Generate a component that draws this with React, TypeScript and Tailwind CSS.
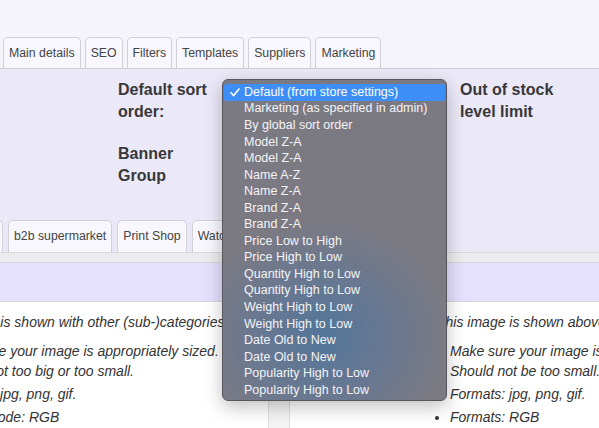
const topTabs = ['Main details', 'SEO', 'Filters', 'Templates', 'Suppliers', 'Marketing'];
const lowerTabs = ['Fashion', 'b2b supermarket', 'Print Shop', 'Watches'];

const sortOptions = [
    'Default (from store settings)',
    'Marketing (as specified in admin)',
    'By global sort order',
    'Model Z-A',
    'Model Z-A',
    'Name A-Z',
    'Name Z-A',
    'Brand Z-A',
    'Brand Z-A',
    'Price Low to High',
    'Price High to Low',
    'Quantity High to Low',
    'Quantity High to Low',
    'Weight High to Low',
    'Weight High to Low',
    'Date Old to New',
    'Date Old to New',
    'Popularity High to Low',
    'Popularity High to Low',
];

function Tab({ label, className = '' }: { label: string; className?: string }) {
    return (
        <div
            className={`flex h-full shrink-0 items-center justify-center whitespace-nowrap rounded-t-[5px] border border-b-0 border-[#d0d0d6] bg-[#f8f7fe] px-[5px] text-[12.3px] text-[#444] ${className}`}
        >
            {label}
        </div>
    );
}

function SortDropdown() {
    return (
        <div className="absolute left-[222px] top-[79px] h-[322px] w-[225px] overflow-hidden rounded-[6px] border border-[#56565c] bg-[radial-gradient(ellipse_70%_45%_at_45%_80%,#53769a_0%,#6a7890_45%,#7b7a83_80%)] pt-[4px] shadow-[0_6px_18px_rgba(0,0,0,0.25)]">
            {sortOptions.map((opt, i) => (
                <div
                    key={i}
                    className={`relative mx-px flex h-[16.56px] items-center whitespace-nowrap pl-[20px] text-[12.5px] text-[#f4f4f6] ${
                        i === 0 ? 'rounded-[2px] bg-[#3d8ef6] text-white' : ''
                    }`}
                >
                    {i === 0 && (
                        <svg className="absolute left-[6px] top-[4px]" width="10" height="9" viewBox="0 0 10 9" fill="none">
                            <path d="M1 4.8 L3.7 7.6 L9 1" stroke="white" strokeWidth="1.6" strokeLinecap="round" strokeLinejoin="round" />
                        </svg>
                    )}
                    {opt}
                </div>
            ))}
        </div>
    );
}

function ImageNotes({
    className = '',
    intro,
    second,
    last,
}: {
    className?: string;
    intro: string;
    second: string;
    last: string;
}) {
    return (
        <div className={`whitespace-nowrap pt-[10px] text-[14px] italic leading-[20px] text-[#333] ${className}`}>
            <p>{intro}</p>
            <ul className="mt-[9px] list-disc space-y-[3px] pl-[13px]">
                <li>
                    Make sure your image is appropriately sized.
                    <br />
                    {second}
                </li>
                <li>Formats: jpg, png, gif.</li>
                <li>{last}</li>
            </ul>
        </div>
    );
}

export default function App() {
    return (
        <div className="relative h-[428px] w-[599px] overflow-hidden bg-[#f5f4fd] font-['Liberation_Sans',Arial,sans-serif]">
            <div className="h-[37px]" />

            {/* top tabs */}
            <div className="flex h-[32px] gap-[4px] border-b border-[#cfcfd4] pl-[3px]">
                {topTabs.map((t) => (
                    <Tab key={t} label={t} />
                ))}
            </div>

            {/* main details panel */}
            <div className="flex h-[183px] flex-col bg-[#ebe8f8]">
                <div className="flex pl-[118px] pt-[10px] text-[16px] font-bold leading-[22px] text-[#383838]">
                    <div className="flex w-[104px] flex-col gap-[20px]">
                        <div>Default sort order:</div>
                        <div>Banner Group</div>
                    </div>
                    <div className="w-[238px]" />
                    <div className="w-[110px]">Out of stock level limit</div>
                </div>

                <div className="mt-auto -ml-[67px] flex h-[32px] gap-[5px]">
                    {lowerTabs.map((t, i) => (
                        <Tab key={i} label={t} className={i === 0 ? 'w-[70px]' : ''} />
                    ))}
                </div>
            </div>

            <div className="h-[11px] border-y border-[#d8d8dc] bg-[#ececee]" />
            <div className="h-[39px] border-b border-[#d6d6dc] bg-[#e4e0fd]" />

            {/* image notes */}
            <div className="flex h-[126px] bg-white">
                <ImageNotes
                    className="-ml-[72px] w-[340px] shrink-0"
                    intro="This image is shown with other (sub-)categories"
                    second="Should not too big or too small."
                    last="Colour mode: RGB"
                />
                <div className="w-[22px] shrink-0 border-x border-[#dedede] bg-[#f4f4f4]" />
                <ImageNotes
                    className="pl-[147px]"
                    intro="This image is shown above the product listing"
                    second="Should not be too small."
                    last="Formats: RGB"
                />
            </div>

            <SortDropdown />
        </div>
    );
}
